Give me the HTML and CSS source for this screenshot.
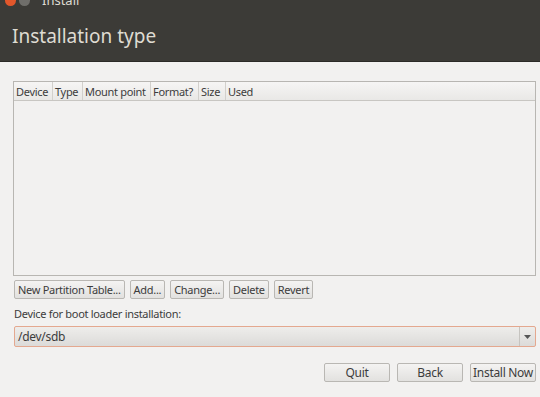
FILE: index.html
```html
<!DOCTYPE html>
<html lang="en">
    <head>
        <meta charset="UTF-8" />
        <title>Install</title>
        <link rel="stylesheet" href="styles.css">
    </head>
    <body>
        <div class="header">
            <div class="titlebar">
                <span class="dot close"></span>
                <span class="dot min"></span>
                <span class="win-title">Install</span>
            </div>
            <h1>Installation type</h1>
        </div>

        <div class="content">
            <div class="table">
                <div class="thead">
                    <span class="col c-device">Device</span>
                    <span class="col c-type">Type</span>
                    <span class="col c-mount">Mount point</span>
                    <span class="col c-format">Format?</span>
                    <span class="col c-size">Size</span>
                    <span class="col c-used">Used</span>
                </div>
                <div class="tbody"></div>
            </div>

            <div class="actions">
                <button>New Partition Table...</button>
                <button>Add...</button>
                <button>Change...</button>
                <button>Delete</button>
                <button>Revert</button>
            </div>

            <label class="boot-label">Device for boot loader installation:</label>
            <div class="combo">
                <span class="combo-value">/dev/sdb</span>
                <span class="combo-arrow">
                    <svg width="7" height="4" viewBox="0 0 7 4"><path d="M0 0h7L3.5 4z" fill="#555"/></svg>
                </span>
            </div>

            <div class="footer">
                <button class="wide">Quit</button>
                <button class="wide">Back</button>
                <button class="wide">Install Now</button>
            </div>
        </div>
    </body>
</html>
```

FILE: styles.css
```css
html {
    font-family: "Noto Sans", "DejaVu Sans", sans-serif;
}

body {
    margin: 0;
    width: 540px;
    height: 397px;
    overflow: hidden;
    background: #f2f1f0;
    color: #3c3c3c;
}

.header {
    display: flow-root;
    height: 61px;
    background: #3c3b37;
    border-bottom: 1px solid #2b2a27;
}

.titlebar {
    display: flex;
    align-items: center;
    height: 10px;
    margin-top: -5px;
    padding-left: 5px;
    gap: 3px;
}

.dot {
    width: 11px;
    height: 11px;
    border-radius: 50%;
}

.close {
    background: #e2572b;
}

.min {
    background: #6f6e6a;
}

.win-title {
    margin-left: 9px;
    font-size: 13px;
    color: #dfdbd2;
}

h1 {
    margin: 18px 0 0 12px;
    font-size: 19px;
    font-weight: normal;
    color: #dfdbd2;
}

.content {
    padding: 19px 4px 0 13px;
    display: flex;
    flex-direction: column;
    letter-spacing: -0.3px;
}

.table {
    height: 193px;
    border: 1px solid #b8b6b2;
    background: #f2f1f0;
    display: flex;
    flex-direction: column;
}

.thead {
    display: flex;
    height: 18px;
    background: linear-gradient(#f6f5f4, #e9e8e6);
    border-bottom: 1px solid #c8c6c2;
    font-size: 11px;
}

.col {
    display: flex;
    align-items: center;
    padding-left: 2px;
    white-space: nowrap;
    overflow: hidden;
    border-right: 1px solid #d2d0cc;
}

.c-device { width: 36px; }
.c-type { width: 27px; }
.c-mount { width: 65px; }
.c-format { width: 45px; }
.c-size { width: 24px; }
.c-used { flex: 1; border-right: none; }

.tbody {
    flex: 1;
}

.actions {
    display: flex;
    gap: 5px;
    margin-top: 4px;
    padding-left: 1px;
}

button {
    font-family: inherit;
    font-size: 11px;
    letter-spacing: -0.3px;
    color: #3c3c3c;
    height: 19px;
    padding: 0 3px;
    border: 1px solid #b9b7b3;
    border-radius: 2px;
    background: linear-gradient(#f4f3f2, #e2e1df);
}

.boot-label {
    margin-top: 7px;
    padding-left: 1px;
    font-size: 11px;
}

.combo {
    margin-top: 5px;
    margin-left: 1px;
    height: 19px;
    border: 1px solid #e4a88f;
    border-radius: 2px;
    background: linear-gradient(#eeedeb, #dcdbd9);
    display: flex;
    align-items: center;
    font-size: 12px;
}

.combo-value {
    flex: 1;
    padding-left: 3px;
}

.combo-arrow {
    width: 15px;
    height: 19px;
    border-left: 1px solid #c6c4c0;
    display: flex;
    align-items: center;
    justify-content: center;
}

.footer {
    display: flex;
    justify-content: flex-end;
    gap: 7px;
    margin-top: 16px;
}

.wide {
    width: 66px;
    font-size: 12px;
    padding: 0;
}
```
